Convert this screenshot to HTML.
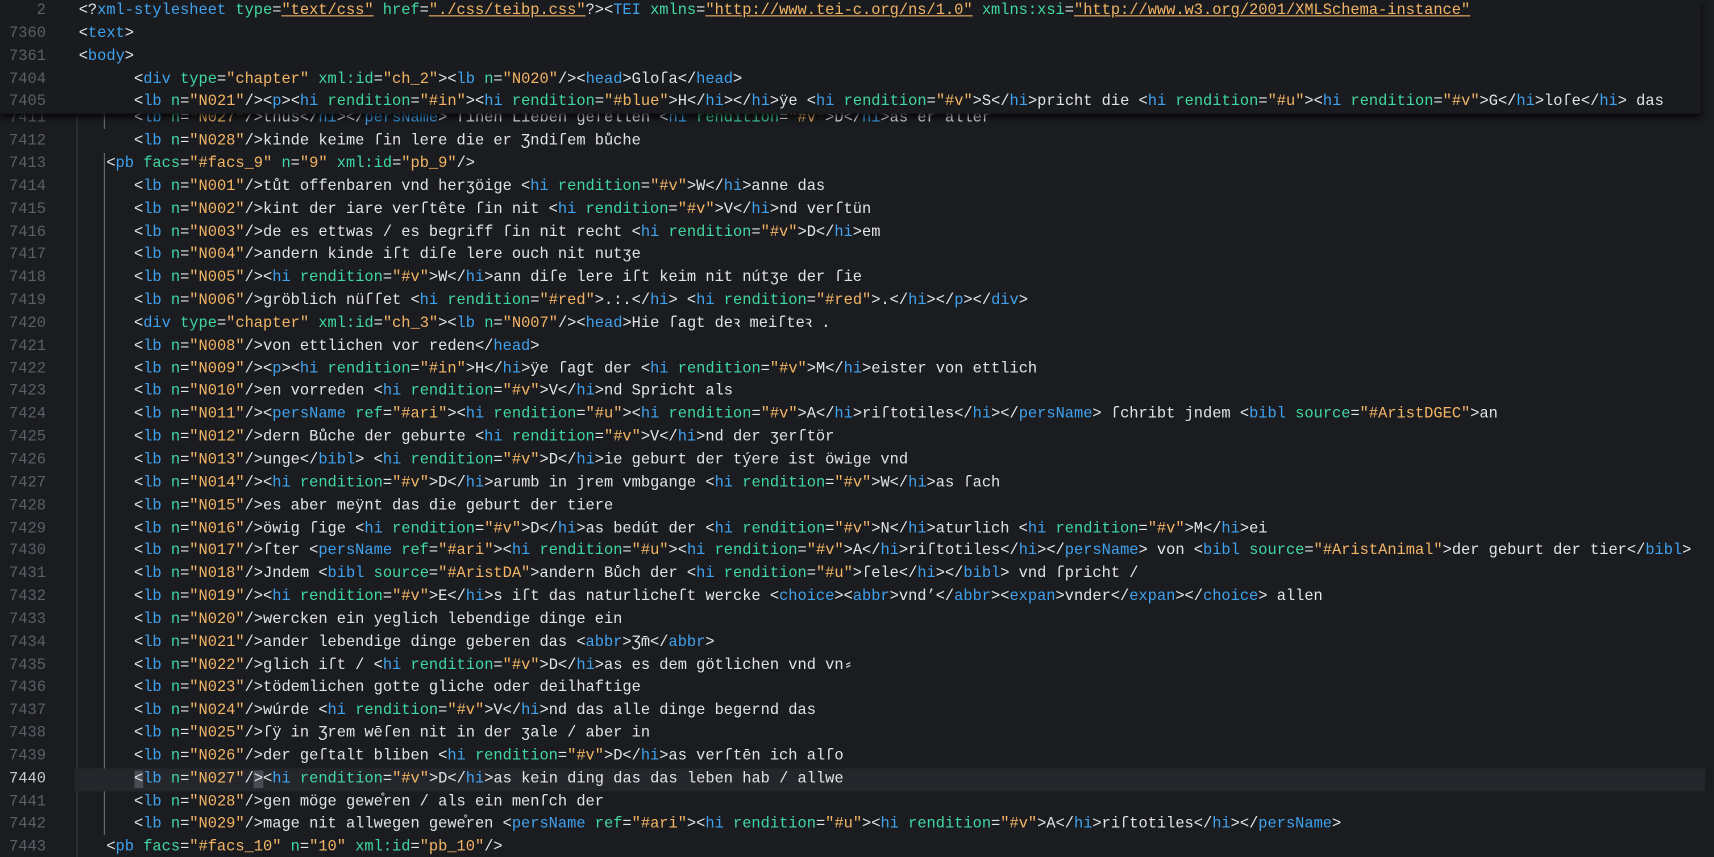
<!DOCTYPE html>
<html><head><meta charset="utf-8">
<style>
html,body{margin:0;padding:0;width:1714px;height:857px;overflow:hidden;background:#1b1c20;}
#wrap{position:absolute;left:0;top:0;width:1568px;height:784px;overflow:hidden;transform:scale(1.0931);transform-origin:0 0;font-family:"Liberation Mono","DejaVu Sans Mono",monospace;font-size:14.06px;color:#e2e3e6;}
.ln{position:absolute;left:0;width:42px;text-align:right;color:#5b5f67;}
.c{position:absolute;left:72px;white-space:pre;}
.row{position:absolute;left:0;right:0;height:20.84px;line-height:20.84px;}
k{color:#3fa2ee}
m{color:#3fd8a0}
v{color:#f3b565}
.u v{text-decoration:underline}
#hdr{position:absolute;left:0;top:0;width:1556px;height:104.2px;background:#1a1b1e;box-shadow:0 3px 6px rgba(0,0,0,.85);z-index:5;overflow:hidden}
#body{position:absolute;left:0;top:98.4px;right:0;bottom:0}
.g{position:absolute;width:1px;background:#3a3c42}
.hl{position:absolute;left:68px;width:1492px;background:#25262b}
.bx{background:#4a4c53}
</style></head><body><div id="wrap">
<div id="body">
<div class="g" style="left:70px;top:0;height:700px"></div>
<div class="g" style="left:95px;top:0;height:20px;background:#6a6d74"></div>
<div class="g" style="left:95px;top:42px;height:624px;background:#6a6d74"></div>
<div class="hl" style="top:604.4px;height:20.84px"></div>
<div class="row" style="top:0px"><span class="ln">7411</span><span class="c">      &lt;<k>lb</k> <m>n</m>=<v>"N027"</v>/&gt;thus&lt;/<k>hi</k>&gt;&lt;/<k>persName</k>&gt; ſinen Lieben geſellen &lt;<k>hi</k> <m>rendition</m>=<v>"#v"</v>&gt;D&lt;/<k>hi</k>&gt;as er aller</span></div>
<div class="row" style="top:20.84px"><span class="ln">7412</span><span class="c">      &lt;<k>lb</k> <m>n</m>=<v>"N028"</v>/&gt;kinde keime ſin lere die er Ʒndiſem bůche</span></div>
<div class="row" style="top:41.68px"><span class="ln">7413</span><span class="c">   &lt;<k>pb</k> <m>facs</m>=<v>"#facs_9"</v> <m>n</m>=<v>"9"</v> <m>xml:id</m>=<v>"pb_9"</v>/&gt;</span></div>
<div class="row" style="top:62.52px"><span class="ln">7414</span><span class="c">      &lt;<k>lb</k> <m>n</m>=<v>"N001"</v>/&gt;tůt offenbaren vnd herʒöige &lt;<k>hi</k> <m>rendition</m>=<v>"#v"</v>&gt;W&lt;/<k>hi</k>&gt;anne das</span></div>
<div class="row" style="top:83.36px"><span class="ln">7415</span><span class="c">      &lt;<k>lb</k> <m>n</m>=<v>"N002"</v>/&gt;kint der iare verſtête ſin nit &lt;<k>hi</k> <m>rendition</m>=<v>"#v"</v>&gt;V&lt;/<k>hi</k>&gt;nd verſtün</span></div>
<div class="row" style="top:104.2px"><span class="ln">7416</span><span class="c">      &lt;<k>lb</k> <m>n</m>=<v>"N003"</v>/&gt;de es ettwas / es begriff ſin nit recht &lt;<k>hi</k> <m>rendition</m>=<v>"#v"</v>&gt;D&lt;/<k>hi</k>&gt;em</span></div>
<div class="row" style="top:125.04px"><span class="ln">7417</span><span class="c">      &lt;<k>lb</k> <m>n</m>=<v>"N004"</v>/&gt;andern kinde iſt diſe lere ouch nit nutʒe</span></div>
<div class="row" style="top:145.88px"><span class="ln">7418</span><span class="c">      &lt;<k>lb</k> <m>n</m>=<v>"N005"</v>/&gt;&lt;<k>hi</k> <m>rendition</m>=<v>"#v"</v>&gt;W&lt;/<k>hi</k>&gt;ann diſe lere iſt keim nit nútʒe der ſie</span></div>
<div class="row" style="top:166.72px"><span class="ln">7419</span><span class="c">      &lt;<k>lb</k> <m>n</m>=<v>"N006"</v>/&gt;gröblich nüſſet &lt;<k>hi</k> <m>rendition</m>=<v>"#red"</v>&gt;.:.&lt;/<k>hi</k>&gt; &lt;<k>hi</k> <m>rendition</m>=<v>"#red"</v>&gt;.&lt;/<k>hi</k>&gt;&lt;/<k>p</k>&gt;&lt;/<k>div</k>&gt;</span></div>
<div class="row" style="top:187.56px"><span class="ln">7420</span><span class="c">      &lt;<k>div</k> <m>type</m>=<v>"chapter"</v> <m>xml:id</m>=<v>"ch_3"</v>&gt;&lt;<k>lb</k> <m>n</m>=<v>"N007"</v>/&gt;&lt;<k>head</k>&gt;Hie ſagt deꝛ meiſteꝛ .</span></div>
<div class="row" style="top:208.4px"><span class="ln">7421</span><span class="c">      &lt;<k>lb</k> <m>n</m>=<v>"N008"</v>/&gt;von ettlichen vor reden&lt;/<k>head</k>&gt;</span></div>
<div class="row" style="top:229.24px"><span class="ln">7422</span><span class="c">      &lt;<k>lb</k> <m>n</m>=<v>"N009"</v>/&gt;&lt;<k>p</k>&gt;&lt;<k>hi</k> <m>rendition</m>=<v>"#in"</v>&gt;H&lt;/<k>hi</k>&gt;ÿe ſagt der &lt;<k>hi</k> <m>rendition</m>=<v>"#v"</v>&gt;M&lt;/<k>hi</k>&gt;eister von ettlich</span></div>
<div class="row" style="top:250.08px"><span class="ln">7423</span><span class="c">      &lt;<k>lb</k> <m>n</m>=<v>"N010"</v>/&gt;en vorreden &lt;<k>hi</k> <m>rendition</m>=<v>"#v"</v>&gt;V&lt;/<k>hi</k>&gt;nd Spricht als</span></div>
<div class="row" style="top:270.92px"><span class="ln">7424</span><span class="c">      &lt;<k>lb</k> <m>n</m>=<v>"N011"</v>/&gt;&lt;<k>persName</k> <m>ref</m>=<v>"#ari"</v>&gt;&lt;<k>hi</k> <m>rendition</m>=<v>"#u"</v>&gt;&lt;<k>hi</k> <m>rendition</m>=<v>"#v"</v>&gt;A&lt;/<k>hi</k>&gt;riſtotiles&lt;/<k>hi</k>&gt;&lt;/<k>persName</k>&gt; ſchribt jndem &lt;<k>bibl</k> <m>source</m>=<v>"#AristDGEC"</v>&gt;an</span></div>
<div class="row" style="top:291.76px"><span class="ln">7425</span><span class="c">      &lt;<k>lb</k> <m>n</m>=<v>"N012"</v>/&gt;dern Bůche der geburte &lt;<k>hi</k> <m>rendition</m>=<v>"#v"</v>&gt;V&lt;/<k>hi</k>&gt;nd der ʒerſtör</span></div>
<div class="row" style="top:312.6px"><span class="ln">7426</span><span class="c">      &lt;<k>lb</k> <m>n</m>=<v>"N013"</v>/&gt;unge&lt;/<k>bibl</k>&gt; &lt;<k>hi</k> <m>rendition</m>=<v>"#v"</v>&gt;D&lt;/<k>hi</k>&gt;ie geburt der týere ist öwige vnd</span></div>
<div class="row" style="top:333.44px"><span class="ln">7427</span><span class="c">      &lt;<k>lb</k> <m>n</m>=<v>"N014"</v>/&gt;&lt;<k>hi</k> <m>rendition</m>=<v>"#v"</v>&gt;D&lt;/<k>hi</k>&gt;arumb in jrem vmbgange &lt;<k>hi</k> <m>rendition</m>=<v>"#v"</v>&gt;W&lt;/<k>hi</k>&gt;as ſach</span></div>
<div class="row" style="top:354.28px"><span class="ln">7428</span><span class="c">      &lt;<k>lb</k> <m>n</m>=<v>"N015"</v>/&gt;es aber meÿnt das die geburt der tiere</span></div>
<div class="row" style="top:375.12px"><span class="ln">7429</span><span class="c">      &lt;<k>lb</k> <m>n</m>=<v>"N016"</v>/&gt;öwig ſige &lt;<k>hi</k> <m>rendition</m>=<v>"#v"</v>&gt;D&lt;/<k>hi</k>&gt;as bedút der &lt;<k>hi</k> <m>rendition</m>=<v>"#v"</v>&gt;N&lt;/<k>hi</k>&gt;aturlich &lt;<k>hi</k> <m>rendition</m>=<v>"#v"</v>&gt;M&lt;/<k>hi</k>&gt;ei</span></div>
<div class="row" style="top:395.96px"><span class="ln">7430</span><span class="c">      &lt;<k>lb</k> <m>n</m>=<v>"N017"</v>/&gt;ſter &lt;<k>persName</k> <m>ref</m>=<v>"#ari"</v>&gt;&lt;<k>hi</k> <m>rendition</m>=<v>"#u"</v>&gt;&lt;<k>hi</k> <m>rendition</m>=<v>"#v"</v>&gt;A&lt;/<k>hi</k>&gt;riſtotiles&lt;/<k>hi</k>&gt;&lt;/<k>persName</k>&gt; von &lt;<k>bibl</k> <m>source</m>=<v>"#AristAnimal"</v>&gt;der geburt der tier&lt;/<k>bibl</k>&gt;</span></div>
<div class="row" style="top:416.8px"><span class="ln">7431</span><span class="c">      &lt;<k>lb</k> <m>n</m>=<v>"N018"</v>/&gt;Jndem &lt;<k>bibl</k> <m>source</m>=<v>"#AristDA"</v>&gt;andern Bůch der &lt;<k>hi</k> <m>rendition</m>=<v>"#u"</v>&gt;ſele&lt;/<k>hi</k>&gt;&lt;/<k>bibl</k>&gt; vnd ſpricht /</span></div>
<div class="row" style="top:437.64px"><span class="ln">7432</span><span class="c">      &lt;<k>lb</k> <m>n</m>=<v>"N019"</v>/&gt;&lt;<k>hi</k> <m>rendition</m>=<v>"#v"</v>&gt;E&lt;/<k>hi</k>&gt;s iſt das naturlicheſt wercke &lt;<k>choice</k>&gt;&lt;<k>abbr</k>&gt;vnd’&lt;/<k>abbr</k>&gt;&lt;<k>expan</k>&gt;vnder&lt;/<k>expan</k>&gt;&lt;/<k>choice</k>&gt; allen</span></div>
<div class="row" style="top:458.48px"><span class="ln">7433</span><span class="c">      &lt;<k>lb</k> <m>n</m>=<v>"N020"</v>/&gt;wercken ein yeglich lebendige dinge ein</span></div>
<div class="row" style="top:479.32px"><span class="ln">7434</span><span class="c">      &lt;<k>lb</k> <m>n</m>=<v>"N021"</v>/&gt;ander lebendige dinge geberen das &lt;<k>abbr</k>&gt;Ʒm̄&lt;/<k>abbr</k>&gt;</span></div>
<div class="row" style="top:500.16px"><span class="ln">7435</span><span class="c">      &lt;<k>lb</k> <m>n</m>=<v>"N022"</v>/&gt;glich iſt / &lt;<k>hi</k> <m>rendition</m>=<v>"#v"</v>&gt;D&lt;/<k>hi</k>&gt;as es dem götlichen vnd vn⸗</span></div>
<div class="row" style="top:521px"><span class="ln">7436</span><span class="c">      &lt;<k>lb</k> <m>n</m>=<v>"N023"</v>/&gt;tödemlichen gotte gliche oder deilhaftige</span></div>
<div class="row" style="top:541.84px"><span class="ln">7437</span><span class="c">      &lt;<k>lb</k> <m>n</m>=<v>"N024"</v>/&gt;wúrde &lt;<k>hi</k> <m>rendition</m>=<v>"#v"</v>&gt;V&lt;/<k>hi</k>&gt;nd das alle dinge begernd das</span></div>
<div class="row" style="top:562.68px"><span class="ln">7438</span><span class="c">      &lt;<k>lb</k> <m>n</m>=<v>"N025"</v>/&gt;ſÿ in Ʒrem wēſen nit in der ʒale / aber in</span></div>
<div class="row" style="top:583.52px"><span class="ln">7439</span><span class="c">      &lt;<k>lb</k> <m>n</m>=<v>"N026"</v>/&gt;der geſtalt bliben &lt;<k>hi</k> <m>rendition</m>=<v>"#v"</v>&gt;D&lt;/<k>hi</k>&gt;as verſtēn ich alſo</span></div>
<div class="row" style="top:604.36px"><span class="ln" style="color:#c8c9cc">7440</span><span class="c">      <span class="bx">&lt;</span><k>lb</k> <m>n</m>=<v>"N027"</v>/<span class="bx">&gt;</span>&lt;<k>hi</k> <m>rendition</m>=<v>"#v"</v>&gt;D&lt;/<k>hi</k>&gt;as kein ding das das leben hab / allwe</span></div>
<div class="row" style="top:625.2px"><span class="ln">7441</span><span class="c">      &lt;<k>lb</k> <m>n</m>=<v>"N028"</v>/&gt;gen möge gewe̊ren / als ein menſch der</span></div>
<div class="row" style="top:646.04px"><span class="ln">7442</span><span class="c">      &lt;<k>lb</k> <m>n</m>=<v>"N029"</v>/&gt;mage nit allwegen gewe̊ren &lt;<k>persName</k> <m>ref</m>=<v>"#ari"</v>&gt;&lt;<k>hi</k> <m>rendition</m>=<v>"#u"</v>&gt;&lt;<k>hi</k> <m>rendition</m>=<v>"#v"</v>&gt;A&lt;/<k>hi</k>&gt;riſtotiles&lt;/<k>hi</k>&gt;&lt;/<k>persName</k>&gt;</span></div>
<div class="row" style="top:666.88px"><span class="ln">7443</span><span class="c">   &lt;<k>pb</k> <m>facs</m>=<v>"#facs_10"</v> <m>n</m>=<v>"10"</v> <m>xml:id</m>=<v>"pb_10"</v>/&gt;</span></div>
</div>
<div id="hdr">
<div class="row" style="top:0"><span class="ln">2</span><span class="c u">&lt;?<k>xml-stylesheet</k> <m>type</m>=<v>"text/css"</v> <m>href</m>=<v>"./css/teibp.css"</v>?&gt;&lt;<k>TEI</k> <m>xmlns</m>=<v>"http://www.tei-c.org/ns/1.0"</v> <m>xmlns:xsi</m>=<v>"http://www.w3.org/2001/XMLSchema-instance"</v></span></div>
<div class="row" style="top:20.84px"><span class="ln">7360</span><span class="c">&lt;<k>text</k>&gt;</span></div>
<div class="row" style="top:41.68px"><span class="ln">7361</span><span class="c">&lt;<k>body</k>&gt;</span></div>
<div class="row" style="top:62.52px"><span class="ln">7404</span><span class="c">      &lt;<k>div</k> <m>type</m>=<v>"chapter"</v> <m>xml:id</m>=<v>"ch_2"</v>&gt;&lt;<k>lb</k> <m>n</m>=<v>"N020"</v>/&gt;&lt;<k>head</k>&gt;Gloſa&lt;/<k>head</k>&gt;</span></div>
<div class="row" style="top:83.36px"><span class="ln">7405</span><span class="c">      &lt;<k>lb</k> <m>n</m>=<v>"N021"</v>/&gt;&lt;<k>p</k>&gt;&lt;<k>hi</k> <m>rendition</m>=<v>"#in"</v>&gt;&lt;<k>hi</k> <m>rendition</m>=<v>"#blue"</v>&gt;H&lt;/<k>hi</k>&gt;&lt;/<k>hi</k>&gt;ÿe &lt;<k>hi</k> <m>rendition</m>=<v>"#v"</v>&gt;S&lt;/<k>hi</k>&gt;pricht die &lt;<k>hi</k> <m>rendition</m>=<v>"#u"</v>&gt;&lt;<k>hi</k> <m>rendition</m>=<v>"#v"</v>&gt;G&lt;/<k>hi</k>&gt;loſe&lt;/<k>hi</k>&gt; das</span></div>
</div>
</div></body></html>
